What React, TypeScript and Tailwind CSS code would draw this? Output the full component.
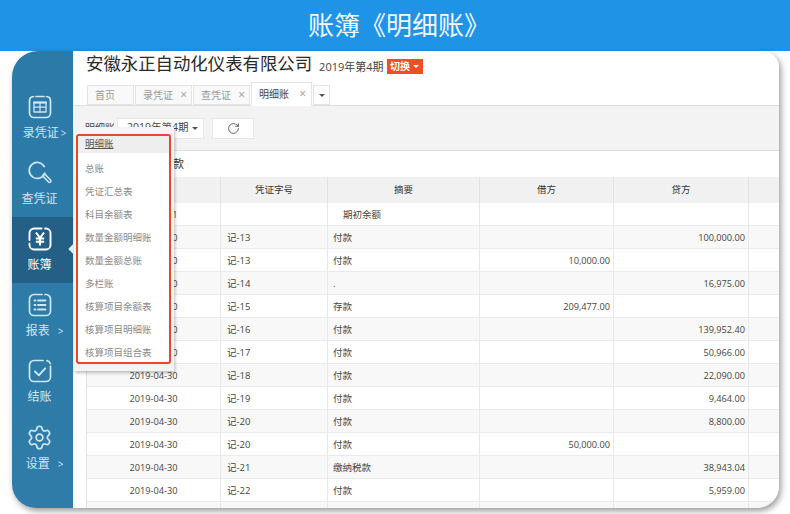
import { RotateCw, Settings } from 'lucide-react';

const cjk = "[font-family:'Open_Sans','Noto_Sans_CJK_SC',sans-serif]";

type Row = { date: string; no: string; note: string; debit?: string; credit?: string };

const rows: Row[] = [
    { date: '2019-04-01', no: '', note: '期初余额' },
    { date: '2019-04-30', no: '记-13', note: '付款', credit: '100,000.00' },
    { date: '2019-04-30', no: '记-13', note: '付款', debit: '10,000.00' },
    { date: '2019-04-30', no: '记-14', note: '.', credit: '16,975.00' },
    { date: '2019-04-30', no: '记-15', note: '存款', debit: '209,477.00' },
    { date: '2019-04-30', no: '记-16', note: '付款', credit: '139,952.40' },
    { date: '2019-04-30', no: '记-17', note: '付款', credit: '50,966.00' },
    { date: '2019-04-30', no: '记-18', note: '付款', credit: '22,090.00' },
    { date: '2019-04-30', no: '记-19', note: '付款', credit: '9,464.00' },
    { date: '2019-04-30', no: '记-20', note: '付款', credit: '8,800.00' },
    { date: '2019-04-30', no: '记-20', note: '付款', debit: '50,000.00' },
    { date: '2019-04-30', no: '记-21', note: '缴纳税款', credit: '38,943.04' },
    { date: '2019-04-30', no: '记-22', note: '付款', credit: '5,959.00' },
    { date: '', no: '', note: '' },
];

const menuItems = ['明细账', '总账', '凭证汇总表', '科目余额表', '数量金额明细账', '数量金额总账', '多栏账', '核算项目余额表', '核算项目明细账', '核算项目组合表'];

const iconProps = {
    width: 26,
    height: 26,
    viewBox: '0 0 26 26',
    fill: 'none',
    stroke: '#cfe6f3',
    strokeWidth: 1.7,
    strokeLinecap: 'round' as const,
    strokeLinejoin: 'round' as const,
};

function VoucherIcon() {
    return (
        <svg {...iconProps}>
            <path d="M6.5 2.500a4.500 4.500 0 0 0-4 4.500v12a4.500 4.500 0 0 0 4.500 4.500h12a4.500 4.500 0 0 0 4.500-4.500V7a4.500 4.500 0 0 0-4-4.500" />
            <path d="M9 2.500h8" />
            <path d="M7 8.500h12v9.500H7z" strokeWidth={1.300} />
            <path d="M7 8.500h12" strokeWidth={2.200} />
            <path d="M7 13.200h12M13 9v9" strokeWidth={1.200} />
        </svg>
    );
}

function SearchIcon() {
    return (
        <svg {...iconProps}>
            <path d="M17.200 6.500a8 8 0 1 0 .6 6.500" />
            <path d="M15.500 15.700l2-2 6 6.300a1.400 1.400 0 0 1-2 2z" strokeWidth={1.600} />
        </svg>
    );
}

function YenIcon() {
    return (
        <svg {...iconProps} stroke="#ffffff" strokeWidth={1.900}>
            <path d="M14.500 2.500H7A4.500 4.500 0 0 0 2.500 7v7M2.500 17.500V19A4.500 4.500 0 0 0 7 23.500h12a4.500 4.500 0 0 0 4.500-4.500V7A4.500 4.500 0 0 0 19 2.500h-1" />
            <path d="M9 6.500l4 5.500 4-5.500M8.800 12.500h8.400M8.800 15.700h8.400M13 12v7.500" strokeWidth={2.100} strokeLinecap="butt" />
        </svg>
    );
}

function ReportIcon() {
    return (
        <svg {...iconProps}>
            <path d="M15 2.500H7A4.500 4.500 0 0 0 2.500 7v12A4.500 4.500 0 0 0 7 23.500h12a4.500 4.500 0 0 0 4.500-4.500V7A4.500 4.500 0 0 0 19 2.500h-1" />
            <path d="M7.500 8.500h1M7.500 13h1M7.500 17.500h1M11 8.500h7.500M11 13h7.500M11 17.500h7.500" strokeWidth={1.800} />
        </svg>
    );
}

function CloseIcon() {
    return (
        <svg {...iconProps}>
            <path d="M16 2.500H7A4.500 4.500 0 0 0 2.500 7v12A4.500 4.500 0 0 0 7 23.500h12a4.500 4.500 0 0 0 4.500-4.500V8" />
            <path d="M20 2.700a4.500 4.500 0 0 1 3.300 2.800" />
            <path d="M8 13.500l3.800 3.800 6.400-7" strokeWidth={1.900} />
        </svg>
    );
}

function SideItem({ icon, label, arrow, active }: { icon: React.ReactNode; label: string; arrow?: string; active?: boolean }) {
    return (
        <div className={`relative h-[66px] flex flex-col items-center pt-[9px] pr-[6px] ${active ? 'bg-[#245f86]' : ''}`}>
            {icon}
            <div className={`mt-[5px] text-[12px] leading-[16px] whitespace-nowrap ${active ? 'text-white' : 'text-[#d3e5ef]'} ${arrow ? 'pl-[10px]' : ''}`}>
                {label}
                {arrow && <span className={`text-[10px] ${arrow === 'near' ? 'ml-[2px]' : 'ml-[8px]'}`}>&gt;</span>}
            </div>
            {active && <div className="absolute right-[-5px] top-[28px] w-[8px] h-[8px] rotate-45 bg-[#e0f4fb]"></div>}
        </div>
    );
}

function Tab({ label, closable, active }: { label: string; closable?: boolean; active?: boolean }) {
    return (
        <div className={`flex items-center justify-between border border-[#e4e4e4] text-[10px] ${active ? 'w-[61px] h-[24px] -mb-px pl-[7px] pr-[5px] bg-white text-[#444] border-b-white' : 'w-[57px] h-[20px] pl-[7px] pr-[4px] bg-[#f9f9f9] text-[#999]'}`}>
            <span>{label}</span>
            {closable && <span className="text-[12px] text-[#999]">×</span>}
        </div>
    );
}

export default function App() {
    return (
        <div className={`w-[790px] h-[514px] bg-white overflow-hidden ${cjk}`}>
            <div className="h-[51px] bg-[#1f93e6] flex items-center justify-center pl-[8px] text-[26px] text-[#f2f9ff]">
                账簿《明细账》
            </div>
            <div className="ml-[12px] w-[767px] h-[457px] relative rounded-bl-[24px] rounded-br-[22px] rounded-tl-[26px] rounded-tr-[16px] shadow-[2px_3px_6px_rgba(0,0,0,0.4)] bg-white">
                <div className="flex h-full rounded-[inherit] overflow-hidden">
                    <div className="w-[61px] shrink-0 bg-gradient-to-b from-[#2c7aa7] to-[#2f7ca9] pt-[34px] border-r border-[#eef3f6] box-content">
                        <SideItem icon={<VoucherIcon />} label="录凭证" arrow="near" />
                        <SideItem icon={<SearchIcon />} label="查凭证" />
                        <SideItem icon={<YenIcon />} label="账簿" active />
                        <SideItem icon={<ReportIcon />} label="报表" arrow="far" />
                        <SideItem icon={<CloseIcon />} label="结账" />
                        <SideItem icon={<Settings size={27} strokeWidth={1.500} color="#cfe6f3" />} label="设置" arrow="far" />
                    </div>

                    <div className="flex-1 min-w-0 flex flex-col">
                        <div className="h-[29px] shrink-0 flex items-center pl-[12px] pt-[1px]">
                            <span className="mb-[6px] text-[17.400px] text-[#2a2a2a] whitespace-nowrap">安徽永正自动化仪表有限公司</span>
                            <span className="ml-[7px] mt-[3px] text-[11px] text-[#444]">2019年第4期</span>
                            <span className="ml-[3px] mt-[1px] w-[36px] h-[15px] bg-[#f04e23] text-white text-[10px] leading-[15px] flex items-center justify-center gap-[3px] font-bold">
                                切换
                                <span className="w-0 h-0 border-x-[3px] border-t-[3px] border-x-transparent border-t-white"></span>
                            </span>
                        </div>
                        <div className="h-[26px] shrink-0 flex items-end gap-[1px] pl-[13px] border-b border-[#dedede]">
                            <div className="w-[47px] h-[20px] border border-[#e4e4e4] bg-[#f9f9f9] text-[10px] text-[#999] flex items-center pl-[7px]">首页</div>
                            <Tab label="录凭证" closable />
                            <Tab label="查凭证" closable />
                            <Tab label="明细账" closable active />
                            <div className="w-[17px] h-[20px] border border-[#e4e4e4] flex items-center justify-center">
                                <span className="w-0 h-0 border-x-[3px] border-t-[3px] border-x-transparent border-t-[#555]"></span>
                            </div>
                        </div>
                        <div className="h-[45px] shrink-0 bg-[#f3f3f4] border-b border-[#dedede] flex items-center pl-[11px] text-[10px] text-[#444]">
                            <span className="w-[32px]">明细账</span>
                            <div className="w-[87px] h-[21px] bg-white border border-[#e6e6e6] flex items-center justify-between pl-[9px] pr-[5px]">
                                <span className="text-[10.500px]">2019年第4期</span>
                                <span className="w-0 h-0 border-x-[3.500px] border-t-[3.500px] border-x-transparent border-t-[#555]"></span>
                            </div>
                            <div className="ml-[8px] w-[42px] h-[21px] bg-white border border-[#e6e6e6] flex items-center justify-center">
                                <RotateCw size={13} strokeWidth={1.500} color="#444" />
                            </div>
                        </div>
                        <div className="h-[26px] shrink-0 flex items-center justify-end w-[110px] text-[11px] text-[#333]">银行存款</div>

                        <div className="flex-1 min-h-0 ml-[12px] border-l border-[#e4e4e4] text-[9.500px] text-[#444]">
                            <div className="h-[26px] grid grid-cols-[134px_107px_152px_134px_135px_1fr] items-stretch bg-[#f1f1f2] text-center text-[#333]">
                                <div className="border-r border-[#e2e2e2]"></div>
                                <div className="border-r border-[#e2e2e2] flex items-center justify-center pt-[1px]">凭证字号</div>
                                <div className="border-r border-[#e2e2e2] flex items-center justify-center pt-[1px]">摘要</div>
                                <div className="border-r border-[#e2e2e2] flex items-center justify-center pt-[1px]">借方</div>
                                <div className="border-r border-[#e2e2e2] flex items-center justify-center pt-[1px]">贷方</div>
                                <div></div>
                            </div>
                            {rows.map((row, i) => (
                                <div key={i} className={`h-[23px] grid grid-cols-[134px_107px_152px_134px_135px_1fr] border-b border-[#ebebeb] ${i % 2 === 1 ? 'bg-[#f8f8f8]' : 'bg-white'}`}>
                                    <div className="border-r border-[#e8e8e8] flex items-center justify-center pt-[2px] text-[9.200px]">{row.date}</div>
                                    <div className="border-r border-[#e8e8e8] flex items-center pl-[6px] pt-[2px]">{row.no}</div>
                                    <div className={`border-r border-[#e8e8e8] flex items-center pt-[2px] ${i === 0 ? 'pl-[15px]' : 'pl-[5px]'}`}>{row.note}</div>
                                    <div className="border-r border-[#e8e8e8] flex items-center justify-end pr-[3px] pt-[2px] text-[9.200px]">{row.debit}</div>
                                    <div className="border-r border-[#e8e8e8] flex items-center justify-end pr-[3px] pt-[2px] text-[9.200px]">{row.credit}</div>
                                    <div></div>
                                </div>
                            ))}
                        </div>
                    </div>
                </div>

                <div className="absolute left-[62px] top-[76px] w-[100px] h-[244px] bg-[#f4f4f4] shadow-[1px_2px_3px_rgba(0,0,0,0.25)] pt-[7px] pl-[2px]">
                    <div className="w-[95px] h-[230px] bg-white border-2 border-[#e8472a] rounded-[3px] overflow-hidden">
                        {menuItems.map((item, i) => (
                            <div key={item} className={`flex items-center pl-[7px] text-[9.500px] whitespace-nowrap ${i === 0 ? 'h-[17px] mb-[5px] bg-[#eeeeee] text-[#555] underline' : 'h-[23px] text-[#8a8a8a]'}`}>
                                {item}
                            </div>
                        ))}
                    </div>
                </div>
            </div>
        </div>
    );
}
